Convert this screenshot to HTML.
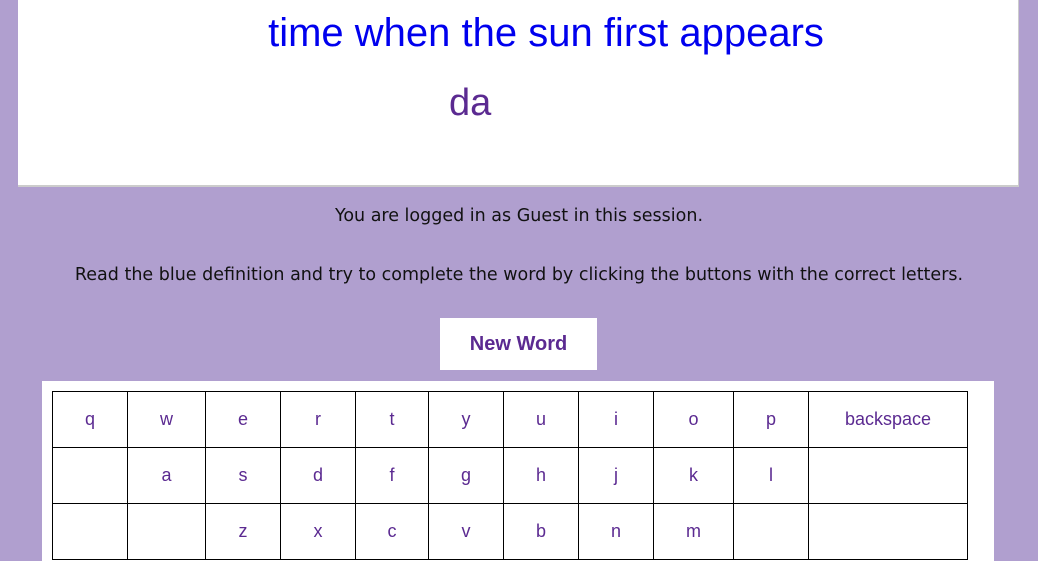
<!DOCTYPE html>
<html><head><style>
html,body{margin:0;padding:0;width:1038px;height:553px;overflow:hidden;background:#b09fcf;font-family:"Liberation Sans",sans-serif;}
.top{position:absolute;left:18px;top:0;width:1000px;height:185px;background:#fff;border-right:1px solid #ccc;border-bottom:2px solid #ccc;}
.def{position:absolute;left:28px;width:1000px;top:11px;text-align:center;color:#0000ee;font-size:40px;}
.ans{position:absolute;left:431px;top:82px;color:#5b2a91;font-size:38px;}
.p{position:absolute;left:0;width:1038px;text-align:center;color:#111;font-family:"DejaVu Sans","Liberation Sans",sans-serif;font-size:17.5px;}
.btn{position:absolute;left:440px;top:318px;width:157px;height:52px;background:#fff;color:#5b2a91;font-weight:bold;font-size:20px;text-align:center;line-height:52px;}
.kb{position:absolute;left:42px;top:381px;width:952px;height:180px;background:#fff;}
table{position:absolute;left:52px;top:391px;border-collapse:collapse;}
td{border:1px solid #000;height:55px;padding:0;text-align:center;color:#5b2a91;font-size:18px;}
</style></head><body>
<div class="top"><div class="def">time when the sun first appears</div><div class="ans">da</div></div>
<div class="p" style="top:206px">You are logged in as Guest in this session.</div>
<div class="p" style="top:265px">Read the blue definition and try to complete the word by clicking the buttons with the correct letters.</div>
<div class="btn">New Word</div>
<div class="kb"></div>
<table>
<tr><td style="width:74px">q</td><td style="width:77px">w</td><td style="width:74px">e</td><td style="width:74px">r</td><td style="width:72px">t</td><td style="width:74px">y</td><td style="width:74px">u</td><td style="width:74px">i</td><td style="width:79px">o</td><td style="width:74px">p</td><td style="width:158px">backspace</td></tr>
<tr><td></td><td>a</td><td>s</td><td>d</td><td>f</td><td>g</td><td>h</td><td>j</td><td>k</td><td>l</td><td></td></tr>
<tr><td></td><td></td><td>z</td><td>x</td><td>c</td><td>v</td><td>b</td><td>n</td><td>m</td><td></td><td></td></tr>
</table>
</body></html>
